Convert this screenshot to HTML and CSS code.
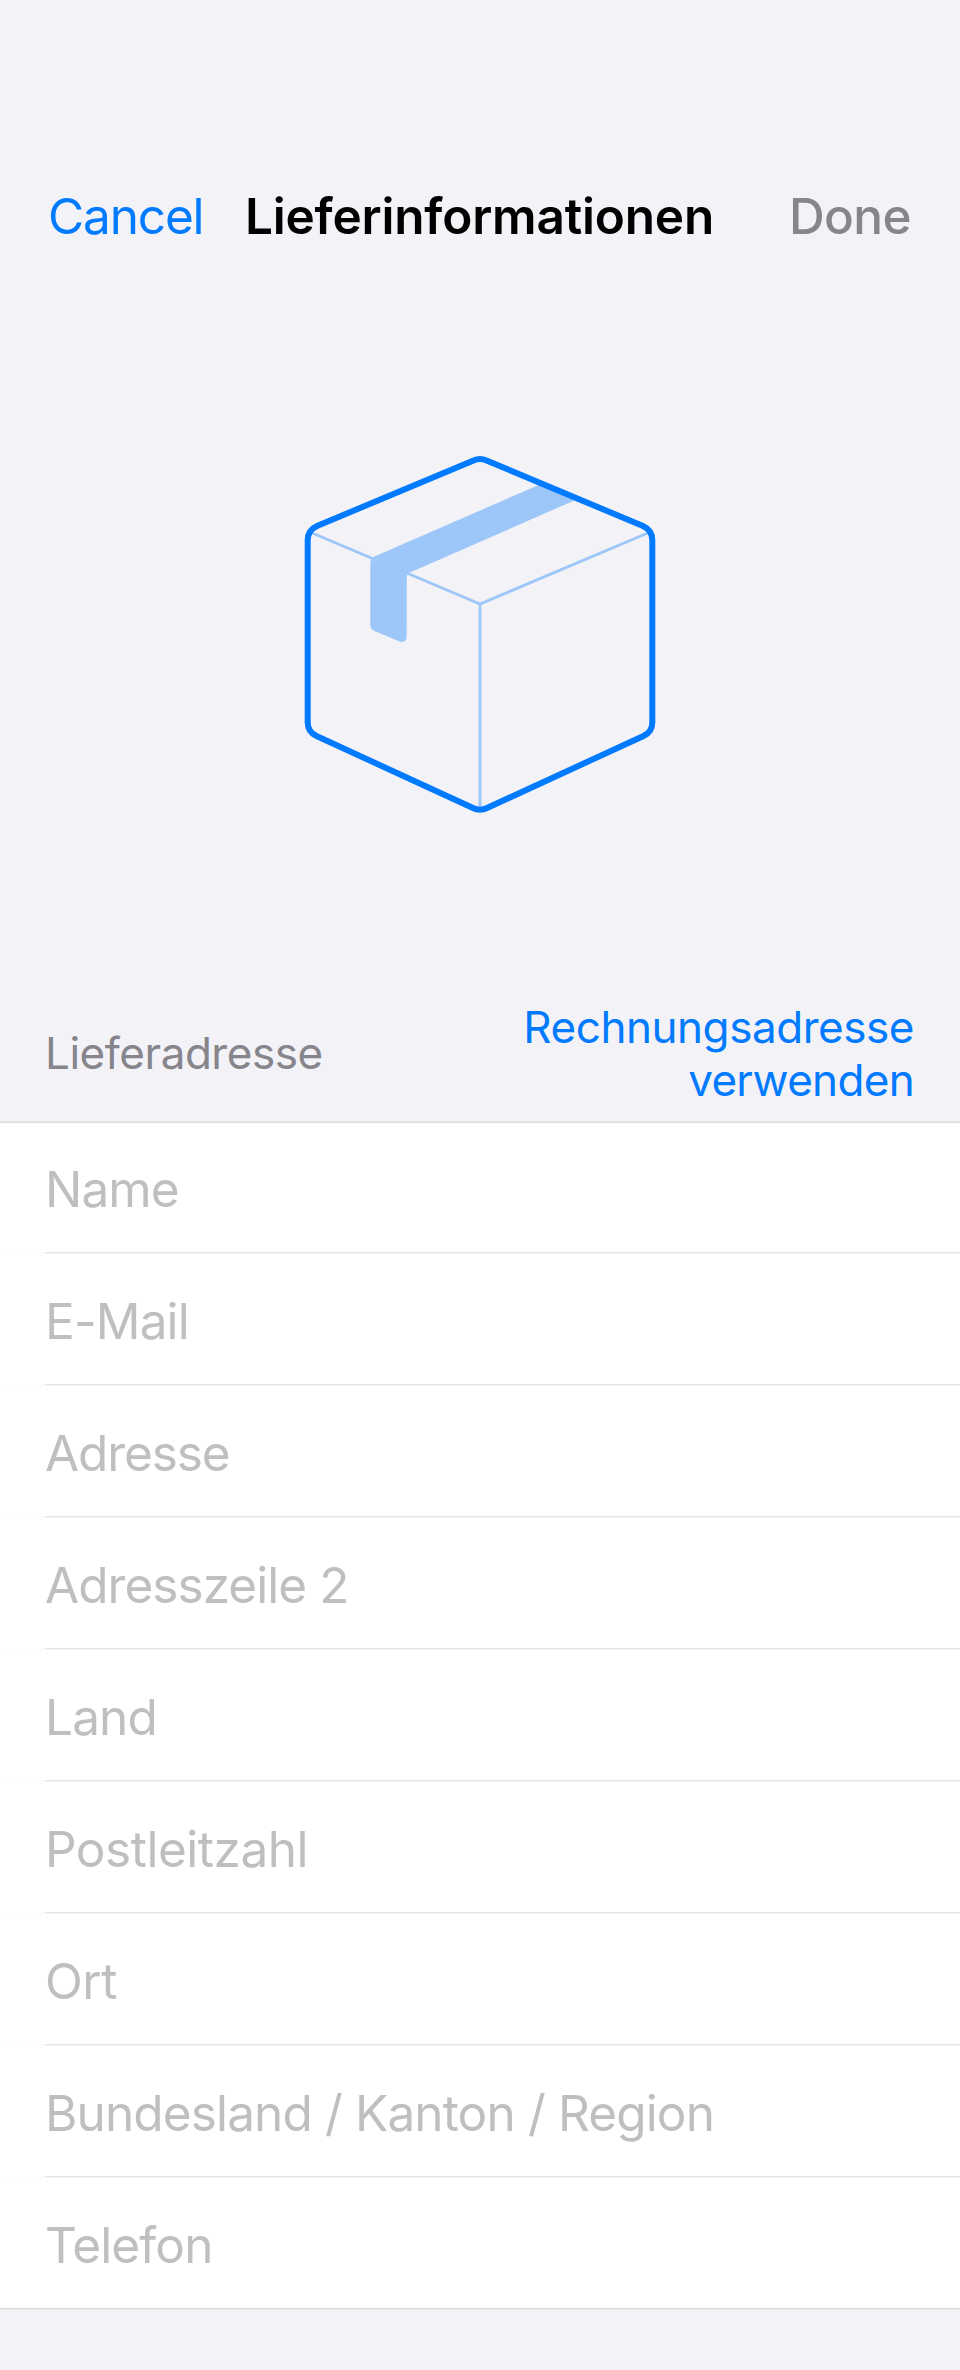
FILE: index.html
```html
<!DOCTYPE html>
<html lang="de">
<head>
<meta charset="utf-8">
<title>Lieferinformationen</title>
<link rel="stylesheet" href="styles.css">
</head>
<body>
<div class="sheet">
  <header class="nav">
    <a class="nav-cancel">Cancel</a>
    <h1 class="nav-title">Lieferinformationen</h1>
    <a class="nav-done">Done</a>
  </header>

  <div class="hero">
    <svg class="box" viewBox="300 450 360 368" width="360" height="368" fill="none">
      <g stroke="#9dc7f9" stroke-width="2.9">
        <path d="M311 532.5L480 604L649 532.5"/>
        <path d="M480 604V808"/>
      </g>
      <path fill="#9dc7f9" d="M541 484L374.5 556.5Q370.3 558.5 370.3 563V624Q370.3 629.5 375.500 631.500L400.300 641.800Q406.700 643 406.700 636V577Q406.700 574 409.500 572.700L576.500 499.500Z"/>
      <path stroke="#007aff" stroke-width="6" d="M473.500 460.500Q480 457.300 486.500 460.500L643 526Q652.300 530.300 652.300 540V722.500Q652.300 731.800 643.500 736L487 808Q480 811.600 473 808L316.500 736Q307.700 731.800 307.700 722.500V540Q307.700 530.300 317 526Z"/>
    </svg>
  </div>

  <div class="section-head">
    <h2 class="section-title">Lieferadresse</h2>
    <a class="section-action">Rechnungsadresse<br><span class="action-tail">verwenden</span></a>
  </div>

  <div class="fields">
    <div class="row"><span class="field">Name</span></div>
    <div class="row"><span class="field">E-Mail</span></div>
    <div class="row"><span class="field tight">Adresse</span></div>
    <div class="row"><span class="field semi-tight">Adresszeile 2</span></div>
    <div class="row"><span class="field">Land</span></div>
    <div class="row"><span class="field loose">Postleitzahl</span></div>
    <div class="row"><span class="field loose">Ort</span></div>
    <div class="row"><span class="field">Bundesland / Kanton / Region</span></div>
    <div class="row"><span class="field">Telefon</span></div>
  </div>
</div>
</body>
</html>
```
FILE: styles.css
```css
* { box-sizing: border-box; }

body {
  margin: 0;
  background: #f2f2f7;
  font-family: Inter, "Liberation Sans", sans-serif;
}

h1, h2 { margin: 0; }

.sheet {
  width: 960px;
  height: 2370px;
  padding-top: 150px;
}

.nav {
  display: grid;
  grid-template-columns: 1fr auto 1fr;
  align-items: center;
  height: 132px;
  padding: 0 49px 0 48px;
  font-size: 49.5px;
  line-height: 60px;
}

.nav-cancel {
  color: #007aff;
  letter-spacing: -1.15px;
}

.nav-title {
  color: #000;
  font-size: inherit;
  font-weight: 600;
  letter-spacing: -0.19px;
}

.nav-done {
  justify-self: end;
  color: #86858b;
  font-weight: 500;
  letter-spacing: -0.6px;
}

.hero {
  display: flex;
  justify-content: center;
  height: 703px;
  padding-top: 168px;
}

.box { display: block; }

.section-head {
  display: flex;
  justify-content: space-between;
  align-items: center;
  height: 136px;
  padding: 0 45px;
  font-size: 44px;
  line-height: 53px;
}

.section-title {
  color: #86858b;
  font-size: inherit;
  font-weight: 400;
  letter-spacing: -0.46px;
}

.section-action {
  padding: 1px 1px 0 0;
  color: #007aff;
  text-align: right;
  letter-spacing: -0.45px;
}

.action-tail { letter-spacing: -0.68px; }

.fields {
  border-top: 1px solid #e9e9ec;
  background: #fff;
}

.row {
  height: 132px;
  padding-left: 45px;
  box-shadow: inset 0 -1px #fafafb;
}

.row:first-child { box-shadow: inset 0 1px #dcdce0, inset 0 -1px #fafafb; }

.field {
  display: block;
  height: 132px;
  padding-top: 37px;
  border-bottom: 1px solid #f3f3f6;
  box-shadow: inset 0 -1px #e6e6eb;
  color: #bfbfbf;
  font-size: 49.5px;
  line-height: 60px;
  letter-spacing: -0.86px;
}

.tight { letter-spacing: -1.1px; }
.semi-tight { letter-spacing: -0.95px; }
.loose { letter-spacing: -0.48px; }

.row:first-child .field { box-shadow: inset 0 1px #dcdce0, inset 0 -1px #e6e6eb; }

.row:last-child {
  border-bottom: 1px solid #e9e9ee;
  box-shadow: inset 0 -1px #d9d9de;
}

.row:last-child .field {
  height: 130px;
  border: 0;
  box-shadow: none;
}
```
